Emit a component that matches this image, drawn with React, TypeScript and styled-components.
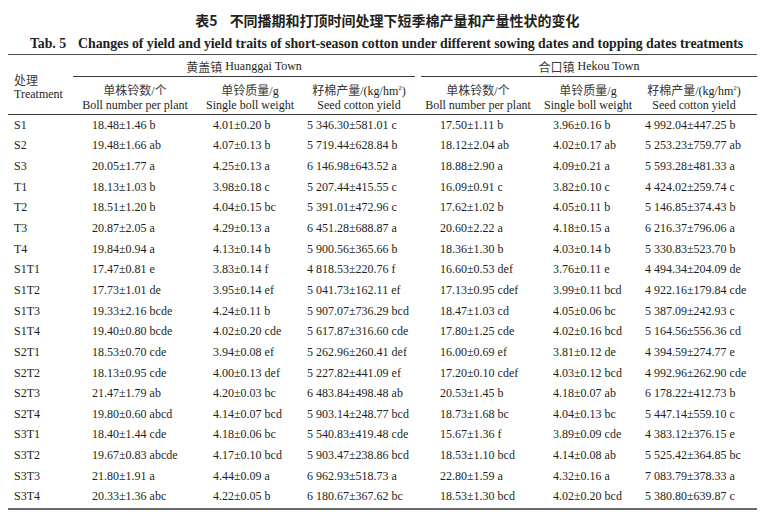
import styled, { createGlobalStyle } from 'styled-components';

const GlobalStyle = createGlobalStyle`
  html, body {
    margin: 0;
    padding: 0;
    background: #fff;
  }
  body {
    font-family: 'Liberation Serif', 'Noto Sans CJK SC', serif;
    color: #231f20;
  }
`;

const COLS = '65px 124px 106px 118px 114px 106px 116px';

type RowData = [string, string, string, string, string, string, string];

const rows: RowData[] = [
  ['S1', '18.48±1.46 b', '4.01±0.20 b', '5 346.30±581.01 c', '17.50±1.11 b', '3.96±0.16 b', '4 992.04±447.25 b'],
  ['S2', '19.48±1.66 ab', '4.07±0.13 b', '5 719.44±628.84 b', '18.12±2.04 ab', '4.02±0.17 ab', '5 253.23±759.77 ab'],
  ['S3', '20.05±1.77 a', '4.25±0.13 a', '6 146.98±643.52 a', '18.88±2.90 a', '4.09±0.21 a', '5 593.28±481.33 a'],
  ['T1', '18.13±1.03 b', '3.98±0.18 c', '5 207.44±415.55 c', '16.09±0.91 c', '3.82±0.10 c', '4 424.02±259.74 c'],
  ['T2', '18.51±1.20 b', '4.04±0.15 bc', '5 391.01±472.96 c', '17.62±1.02 b', '4.05±0.11 b', '5 146.85±374.43 b'],
  ['T3', '20.87±2.05 a', '4.29±0.13 a', '6 451.28±688.87 a', '20.60±2.22 a', '4.18±0.15 a', '6 216.37±796.06 a'],
  ['T4', '19.84±0.94 a', '4.13±0.14 b', '5 900.56±365.66 b', '18.36±1.30 b', '4.03±0.14 b', '5 330.83±523.70 b'],
  ['S1T1', '17.47±0.81 e', '3.83±0.14 f', '4 818.53±220.76 f', '16.60±0.53 def', '3.76±0.11 e', '4 494.34±204.09 de'],
  ['S1T2', '17.73±1.01 de', '3.95±0.14 ef', '5 041.73±162.11 ef', '17.13±0.95 cdef', '3.99±0.11 bcd', '4 922.16±179.84 cde'],
  ['S1T3', '19.33±2.16 bcde', '4.24±0.11 b', '5 907.07±736.29 bcd', '18.47±1.03 cd', '4.05±0.06 bc', '5 387.09±242.93 c'],
  ['S1T4', '19.40±0.80 bcde', '4.02±0.20 cde', '5 617.87±316.60 cde', '17.80±1.25 cde', '4.02±0.16 bcd', '5 164.56±556.36 cd'],
  ['S2T1', '18.53±0.70 cde', '3.94±0.08 ef', '5 262.96±260.41 def', '16.00±0.69 ef', '3.81±0.12 de', '4 394.59±274.77 e'],
  ['S2T2', '18.13±0.95 cde', '4.00±0.13 def', '5 227.82±441.09 ef', '17.20±0.10 cdef', '4.03±0.12 bcd', '4 992.96±262.90 cde'],
  ['S2T3', '21.47±1.79 ab', '4.20±0.03 bc', '6 483.84±498.48 ab', '20.53±1.45 b', '4.18±0.07 ab', '6 178.22±412.73 b'],
  ['S2T4', '19.80±0.60 abcd', '4.14±0.07 bcd', '5 903.14±248.77 bcd', '18.73±1.68 bc', '4.04±0.13 bc', '5 447.14±559.10 c'],
  ['S3T1', '18.40±1.44 cde', '4.18±0.06 bc', '5 540.83±419.48 cde', '15.67±1.36 f', '3.89±0.09 cde', '4 383.12±376.15 e'],
  ['S3T2', '19.67±0.83 abcde', '4.17±0.10 bcd', '5 903.47±238.86 bcd', '18.53±1.10 bcd', '4.14±0.08 ab', '5 525.42±364.85 bc'],
  ['S3T3', '21.80±1.91 a', '4.44±0.09 a', '6 962.93±518.73 a', '22.80±1.59 a', '4.32±0.16 a', '7 083.79±378.33 a'],
  ['S3T4', '20.33±1.36 abc', '4.22±0.05 b', '6 180.67±367.62 bc', '18.53±1.30 bcd', '4.02±0.20 bcd', '5 380.80±639.87 c']
];

// left padding of the values in each data column
const pads = [19, 16, 4, 19, 18, 4];

const BollHead = () => (
  <>
    <span>
      <Cn>单株铃数</Cn>/<Cn>个</Cn>
    </span>
    <span>Boll number per plant</span>
  </>
);

const WeightHead = () => (
  <>
    <span>
      <Cn>单铃质量</Cn>/g
    </span>
    <span>Single boll weight</span>
  </>
);

const YieldHead = () => (
  <>
    <span>
      <Cn>籽棉产量</Cn>/(kg/hm<Sup>2</Sup>)
    </span>
    <span>Seed cotton yield</span>
  </>
);

const App = () => {
  return (
    <>
      <GlobalStyle />
      <Page>
        <CnTitle>
          <TabNo>表5</TabNo>不同播期和打顶时间处理下短季棉产量和产量性状的变化
        </CnTitle>
        <EnTitle>
          <TabNo>Tab. 5</TabNo>Changes of yield and yield traits of short-season cotton under
          different sowing dates and topping dates treatments
        </EnTitle>
        <Table>
          <Head>
            <TreatHead>
              <Cn>处理</Cn>
              <span>Treatment</span>
            </TreatHead>
            <GroupHead $from={2} $to={5} $gap={6}>
              <Cn>黄盖镇</Cn> Huanggai Town
            </GroupHead>
            <GroupHead $from={5} $to={8} $gap={0}>
              <Cn>合口镇</Cn> Hekou Town
            </GroupHead>
            <ColHead $col={2}>
              <BollHead />
            </ColHead>
            <ColHead $col={3}>
              <WeightHead />
            </ColHead>
            <ColHead $col={4} $right={6}>
              <YieldHead />
            </ColHead>
            <ColHead $col={5}>
              <BollHead />
            </ColHead>
            <ColHead $col={6}>
              <WeightHead />
            </ColHead>
            <ColHead $col={7} $right={10}>
              <YieldHead />
            </ColHead>
          </Head>
          <Body>
            {rows.map((row) => (
              <Row key={row[0]}>
                <Label>{row[0]}</Label>
                {row.slice(1).map((value, i) => (
                  <Cell key={i} $pad={pads[i]}>
                    {value}
                  </Cell>
                ))}
              </Row>
            ))}
          </Body>
        </Table>
      </Page>
    </>
  );
};

export default App;

const Page = styled.div`
  width: 773px;
  height: 520px;
  padding-top: 10px;
  box-sizing: border-box;
  overflow: hidden;
`;

const CnTitle = styled.div`
  text-align: center;
  font-family: 'Noto Sans CJK SC', sans-serif;
  font-weight: 700;
  font-size: 14px;
  line-height: 20px;
  height: 20px;
  padding-left: 2px;
`;

const EnTitle = styled.div`
  margin-top: 4px;
  text-align: center;
  font-family: 'Liberation Serif', serif;
  font-weight: 700;
  font-size: 13.85px;
  line-height: 20px;
  height: 20px;
  white-space: nowrap;
  letter-spacing: -0.05px;
`;

const TabNo = styled.span`
  margin-right: 12px;
`;

const Table = styled.div`
  width: 749px;
  margin-left: 8px;
  border-top: 1.5px solid #4a4a4a;
  border-bottom: 2px solid #6a6a6a;
  font-family: 'Liberation Serif', serif;
  font-size: 12px;
`;

const Head = styled.div`
  display: grid;
  grid-template-columns: ${COLS};
  grid-template-rows: 22px 37px;
  border-bottom: 1px solid #3a3a3a;
`;

const Cn = styled.span`
  font-family: 'Noto Sans CJK SC', sans-serif;
  font-size: 12px;
  font-weight: 400;
  color: #3a3a3a;
`;

const TreatHead = styled.div`
  grid-column: 1;
  grid-row: 1 / 3;
  display: flex;
  flex-direction: column;
  justify-content: center;
  padding: 4px 0 0 6px;
  line-height: 15px;
`;

const GroupHead = styled.div<{ $from: number; $to: number; $gap: number }>`
  grid-row: 1;
  grid-column: ${(p) => p.$from} / ${(p) => p.$to};
  margin-right: ${(p) => p.$gap}px;
  display: flex;
  align-items: center;
  justify-content: center;
  gap: 3px;
  border-bottom: 1px solid #3a3a3a;
  padding-top: 1px;
`;

const ColHead = styled.div<{ $col: number; $right?: number }>`
  grid-row: 2;
  grid-column: ${(p) => p.$col};
  display: flex;
  flex-direction: column;
  align-items: center;
  justify-content: center;
  padding: 4px ${(p) => p.$right ?? 0}px 0 0;
  line-height: 13.5px;
  white-space: nowrap;
`;

const Sup = styled.sup`
  font-size: 7px;
  line-height: 0;
  vertical-align: 5px;
`;

const Body = styled.div`
  display: flex;
  flex-direction: column;
  padding-bottom: 1px;
`;

const Row = styled.div`
  display: grid;
  grid-template-columns: ${COLS};
  height: 20.65px;
  align-items: center;
`;

const Label = styled.div`
  padding-left: 6px;
  white-space: nowrap;
`;

const Cell = styled.div<{ $pad: number }>`
  padding-left: ${(p) => p.$pad}px;
  white-space: nowrap;
`;
